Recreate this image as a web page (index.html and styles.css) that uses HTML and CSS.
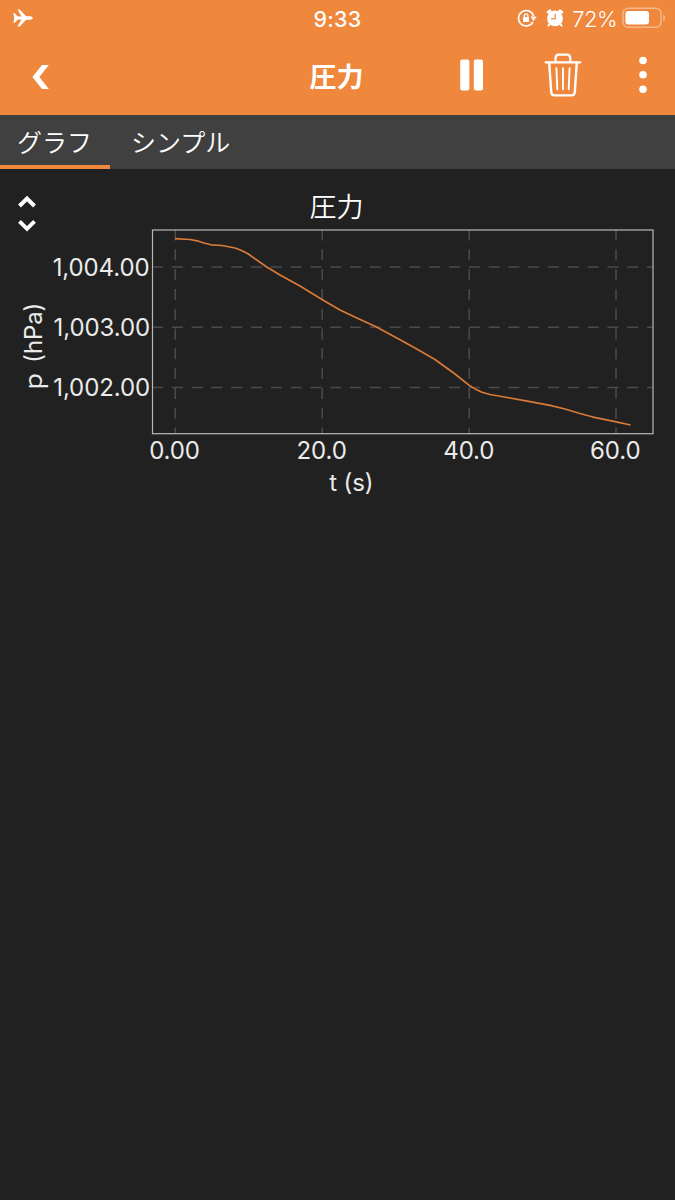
FILE: index.html
```html
<!DOCTYPE html>
<html lang="ja">
<head>
    <meta charset="UTF-8">
    <meta name="viewport" content="width=device-width, initial-scale=1.0">
    <title>圧力</title>
    <link rel="stylesheet" href="styles.css">
</head>
<body>

    <header>
        <!-- Status bar -->
        <div class="status-bar">
            <svg class="airplane" width="20" height="18" viewBox="0 0 20 18">
                <path fill="#fff" d="M0.4 4.2h1.5l2.5 3.1 4.1.1L4.5.4h2.2l6.4 6.9h4c1.5 0 2.6.8 2.6 1.7s-1.1 1.7-2.6 1.7h-4l-6.4 6.9H4.5l4-7-4.1.1-2.5 3.1H.4L1.2 9z"/>
            </svg>
            <div class="clock">9:33</div>
            <div class="indicators">
                <svg class="rotation-lock" width="20" height="18" viewBox="0 0 20 18">
                    <path fill="none" stroke="#fff" stroke-width="1.7" d="M16 12.9A7.7 7.7 0 1 1 16.6 7"/>
                    <path fill="#fff" d="M13.6 7.4h6l-3 4.8z"/>
                    <path fill="none" stroke="#fff" stroke-width="1.3" d="M7.3 8.5V6.8a1.8 1.8 0 0 1 3.6 0v1.7"/>
                    <rect x="6.1" y="8.1" width="6" height="5" rx="0.6" fill="#fff"/>
                </svg>
                <svg class="alarm" width="18" height="18" viewBox="0 0 18 18">
                    <circle cx="9" cy="9.4" r="7.9" fill="#fff"/>
                    <path stroke="#fff" stroke-width="2.8" stroke-linecap="round" d="M2.2 3.2 4 1.8M15.8 3.2 14 1.8"/>
                    <path stroke="#fff" stroke-width="2" stroke-linecap="round" d="M3.6 15 2.4 16.6M14.4 15l1.2 1.6"/>
                    <path fill="none" stroke="#ef873c" stroke-width="1.2" d="M9.2 4.8v5H5"/>
                </svg>
                <span class="percent">72%</span>
                <svg width="44" height="22" viewBox="0 0 44 22">
                    <rect x="1" y="1.2" width="38" height="19" rx="5" fill="none" stroke="#f6b88a" stroke-width="1.5"/>
                    <rect x="3.4" y="3.9" width="23.6" height="13.5" rx="3" fill="#fff"/>
                    <path fill="#f6b88a" d="M41.2 7.3c2.4 1 2.4 6 0 7z"/>
                </svg>
            </div>
        </div>

        <!-- Navigation bar -->
        <div class="nav-bar">
            <svg class="back" width="18" height="26" viewBox="0 0 18 26">
                <path fill="#fff" d="M10 2h6.8L7.4 14l9.4 12H10L.4 14z"/>
            </svg>
            <h1>圧力</h1>
            <div class="actions">
                <svg class="pause" width="24" height="32" viewBox="0 0 24 32">
                    <rect x="0.2" y="0.5" width="9.2" height="31" rx="2" fill="#fff"/>
                    <rect x="13.8" y="0.5" width="9.2" height="31" rx="2" fill="#fff"/>
                </svg>
                <svg class="trash" width="38" height="44" viewBox="0 0 38 44">
                    <g fill="none" stroke="#fff" stroke-linecap="round" stroke-linejoin="round">
                        <path stroke-width="2.2" d="M1.6 9.3h34.8M11.5 9V5.2q0-3.6 3.4-3.6h8q3.4 0 3.4 3.6V9"/>
                        <path stroke-width="2.4" d="M5.2 9.6 7.2 39q.2 3.4 3.4 3.4h16.8q3.2 0 3.4-3.4L32.8 9.6"/>
                        <path stroke-width="1.9" d="m12.4 15.2.9 21M19 15.2v21M25.6 15.2l-.9 21"/>
                    </g>
                </svg>
                <svg class="more" width="8" height="38" viewBox="0 0 8 38">
                    <circle cx="4" cy="4.5" r="3.8" fill="#fff"/>
                    <circle cx="4" cy="18.8" r="3.8" fill="#fff"/>
                    <circle cx="4" cy="33.2" r="3.8" fill="#fff"/>
                </svg>
            </div>
        </div>
    </header>

    <!-- Tabs -->
    <nav class="tabs">
        <div class="tab active">グラフ</div>
        <div class="tab">シンプル</div>
    </nav>

    <!-- Graph -->
    <main>
        <div class="graph-header">
            <svg class="collapse" width="20" height="38" viewBox="0 0 20 38">
                <path fill="none" stroke="#fff" stroke-width="4" d="M1.5 11 9 3.6l7.5 7.4M1.5 26.4 9 33.8l7.5-7.4"/>
            </svg>
            <h2>圧力</h2>
        </div>
        <svg class="graph" width="675" height="290" viewBox="0 0 675 290">
            <g class="grid">
                <path d="M152 47h501M152 107.3h501M152 167.5h501"/>
                <path d="M175.3 9.5v204M322.2 9.5v204M469.2 9.5v204M616 9.5v204"/>
            </g>
            <rect class="frame" x="152.5" y="10" width="500.5" height="203.7"/>
            <path class="curve" d="M175 18.7 190 19.5 197 20.8 204 23 211 24.8 222 25.5 235 28 241 30.2 248 33.8 266 46.5 280 55 300 66 322 79.5 340 90 358 98.6 376 106.8 395 117 415 128 435 139.5 455 154 469 165.2 475 168.9 482 172.2 490 174.5 510 178 530 181.7 550 185.3 565 189 580 193.5 592 196.8 615 201.6 630.5 205"/>
            <g class="y-ticks">
                <text x="149.5" y="55.5">1,004.00</text>
                <text x="150" y="115.7">1,003.00</text>
                <text x="150" y="175.7">1,002.00</text>
            </g>
            <g class="x-ticks">
                <text x="174.5" y="239">0.00</text>
                <text x="321.7" y="239">20.0</text>
                <text x="468.8" y="239">40.0</text>
                <text x="615.3" y="239">60.0</text>
            </g>
            <text class="axis-name" x="351.3" y="271">t (s)</text>
            <text class="axis-name" transform="translate(42 128) rotate(-90)">&#xFF50; (hPa)</text>
        </svg>
    </main>

</body>
</html>
```
FILE: styles.css
```css
body {
    margin: 0;
    min-height: 1200px;
    background-color: #212121;
    color: white;
    font-family: Inter, "Noto Sans CJK JP", sans-serif;
    overflow: hidden;
}

svg {
    display: block;
    flex: none;
}

header {
    height: 115px;
    background-color: #ef873c;
}

/* Status bar */
.status-bar {
    display: grid;
    grid-template-columns: 1fr auto 1fr;
    align-items: center;
    height: 36px;
    padding: 0 9px 0 13px;
}

.clock {
    margin: 1px 2px 0 -2px;
    font-size: 21.5px;
    font-weight: 500;
    letter-spacing: 0.2px;
}

.indicators {
    display: flex;
    align-items: center;
    justify-content: flex-end;
}

.alarm {
    margin: 0 8px 0 9px;
}

.percent {
    margin: 1px 5px 0 0;
    font-size: 22px;
    font-weight: 350;
    letter-spacing: -0.6px;
}

/* Navigation bar */
.nav-bar {
    display: grid;
    grid-template-columns: 1fr auto 1fr;
    align-items: center;
    height: 77px;
    padding: 0 28px 0 32px;
}

.back {
    margin-top: 2px;
}

h1 {
    margin: 2px 3px 0 -3px;
    font-family: "Noto Sans CJK JP", sans-serif;
    font-size: 27px;
    font-weight: 700;
    line-height: 40px;
}

.actions {
    display: flex;
    align-items: center;
    justify-content: flex-end;
}

.pause {
    margin-top: 1px;
}

.trash {
    margin: 0 57px 0 60px;
}

/* Tabs */
.tabs {
    display: flex;
    height: 54px;
    background-color: #404040;
}

.tab {
    box-sizing: border-box;
    height: 54px;
    padding: 0 21px;
    border-bottom: 4px solid transparent;
    font-size: 25px;
    font-weight: 350;
    line-height: 57px;
    white-space: nowrap;
}

.tab.active {
    width: 110px;
    padding: 0 17px;
    border-bottom-color: #ef873c;
}

/* Graph */
.graph-header {
    display: grid;
    grid-template-columns: 1fr auto 1fr;
    align-items: start;
    height: 51px;
}

.collapse {
    margin: 26px 0 0 18px;
}

h2 {
    margin: 19px 1px 0 -1px;
    font-size: 27px;
    font-weight: 350;
    line-height: 40px;
}

.graph text {
    fill: #ebebeb;
    font-size: 24px;
    letter-spacing: -0.1px;
}

.grid path {
    fill: none;
    stroke: #4b4b4b;
    stroke-width: 1.5;
    stroke-dasharray: 11 8.8;
}

.frame {
    fill: none;
    stroke: #b8b8b8;
    stroke-width: 1.2;
}

.curve {
    fill: none;
    stroke: #d97b37;
    stroke-width: 1.7;
    stroke-linejoin: round;
}

.y-ticks {
    text-anchor: end;
}

.x-ticks,
.axis-name {
    text-anchor: middle;
}
```
